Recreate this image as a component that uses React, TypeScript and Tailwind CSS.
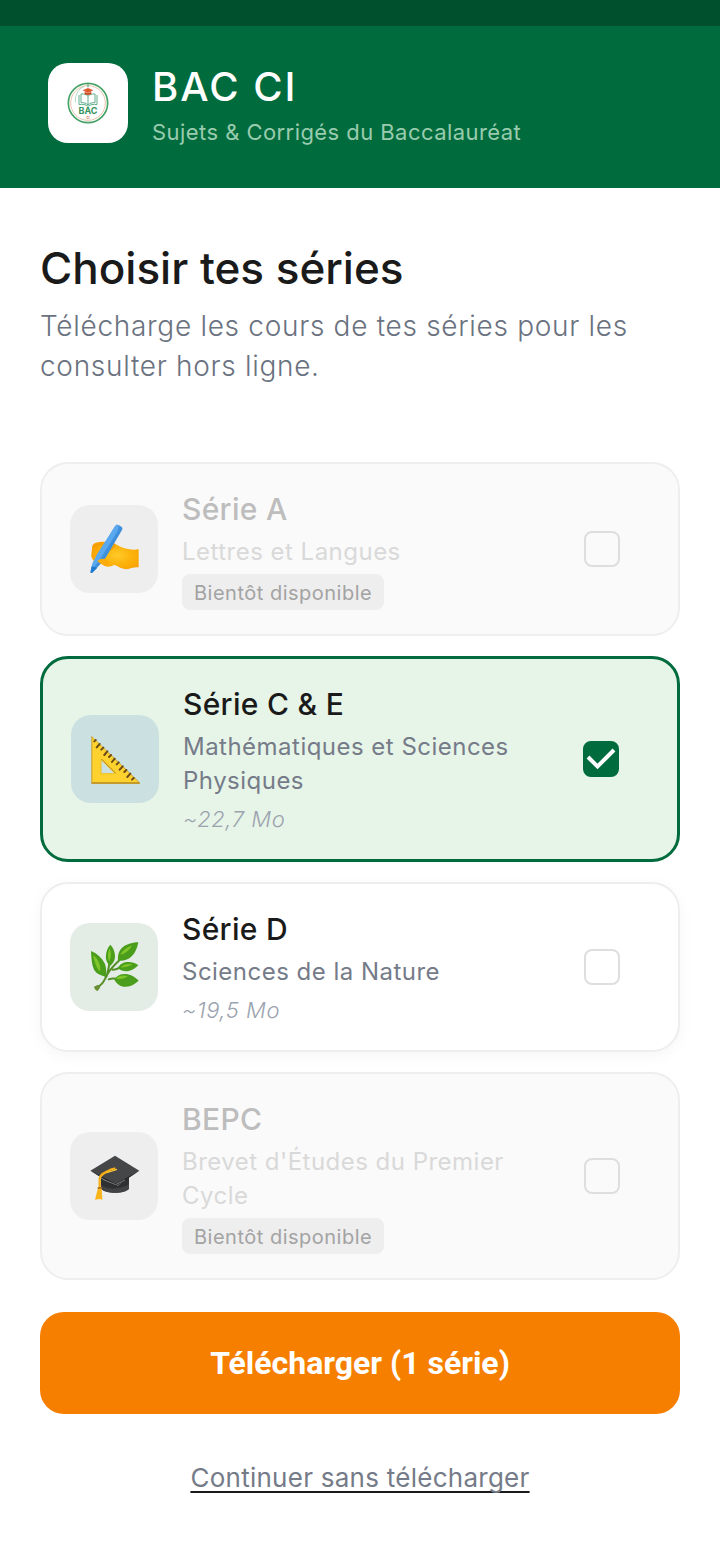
import React, { useState } from 'react';

interface Serie {
  id: string;
  title: string;
  description: string;
  size?: string; // missing while the download is not available
  tileClass: string;
  icon: React.ReactNode;
}

const WritingHandIcon = () => (
  <svg viewBox="84 84 156 156" className="size-[52px]" aria-hidden="true">
    <defs>
      <radialGradient id="hand" cx="0.55" cy="0.5" r="0.6">
        <stop offset="0" stopColor="#ffca28" />
        <stop offset="0.5" stopColor="#fcb40d" />
        <stop offset="1" stopColor="#f9a000" />
      </radialGradient>
    </defs>
    <path
      d="M96 190c-4-9-1-18 0-27 0-9 1-15 8-18 8-5 20-5 32-5 9-1 17 1 24 4 12 6 22 12 34 16 14 4 28 5 42 3v54c-9 0-16 0-24 3-12 4-19 3-29-1-8-3-13-7-20-9-8 3-17 7-26 4-7-2-11-6-16-9-5-2-8-5-13-5-6-1-10-5-12-10z"
      fill="url(#hand)"
    />
    <path d="M146 140c10-1 18 4 18 12-2 8-12 11-20 15-12 5-20 15-26 25" fill="none" stroke="#e88e05" strokeWidth="3" />
    <path d="M100 156c8-7 17-9 29-8" fill="none" stroke="#f29b04" strokeWidth="3" />
    <path d="M165 94c3-5 7-6 12-3l7 4c4 3 4 6 2 10l-48 82-20 24-22 23c-3 1-5-1-4-4l6-23 13-25z" fill="#3f90dc" />
    <path d="M165 94c3-5 7-6 12-3l-4 17-54 87-12 15-9 13-6 7c-1 0-1-1 0-4l6-23 13-25z" fill="#5aa9ee" />
    <path d="M95 214l17 4-16 16c-3 1-5-1-4-4z" fill="#1e7bd0" />
    <path d="M112 199c5-7 13-9 19-7 8 2 14 6 15 12-4 5-8 7-15 5-8-1-12-5-19-10z" fill="#fbab08" />
  </svg>
);

const SetSquareIcon = () => (
  <svg viewBox="87 84 156 156" className="size-[52px]" aria-hidden="true">
    <path d="M94 92l146 141v4H94z" fill="#c49a2c" />
    <path d="M97 97l138 134H97z" fill="#fdd22f" />
    <path d="M123 165v41h41z" fill="#cbe0e0" />
    <path d="M123 165v41h41" fill="none" stroke="#edc021" strokeWidth="3" />
    <path d="M124 162l43 43" stroke="#a97b1b" strokeWidth="3" />
    <path
      d="M103 109l4-4M110 127l9-10M124 134l6-6M133 150l9-11M147 156l6-6M156 171l8-10M170 178l6-6M179 194l9-10M193 201l6-6M202 216l9-10M216 224l5-5"
      stroke="#6c4b17"
      strokeWidth="6"
      strokeLinecap="round"
    />
  </svg>
);

const HerbIcon = () => (
  <svg viewBox="84 78 156 156" className="size-[52px]" aria-hidden="true">
    <path
      d="M108 219c20-9 24-22 33-39 8-16 20-28 37-44M140 184c4-22 10-34 9-52M138 188c-4-12-6-20-12-29M158 164c11 1 18-4 24-8M146 193c12-4 20-3 29 0"
      fill="none"
      stroke="#558f27"
      strokeWidth="6"
      strokeLinecap="round"
    />
    <path d="M102 215l12-6 7 8-8 11c-6-2-10-7-11-13z" fill="#6b8f35" />
    <path d="M93 108c17 7 33 20 42 39 5 14 4 27 2 37-12-2-26-6-35-20-7-15-8-36-9-56z" fill="#4a9e1b" />
    <path d="M99 121c10 6 18 18 21 31 1 7 1 13-1 17-10-10-15-28-20-48z" fill="#80c62a" />
    <path d="M151 89c9 9 15 23 14 38-1 12-7 20-15 26-8-8-14-18-12-33 1-12 5-22 13-31z" fill="#4a9e1b" />
    <path d="M149 100c5 12 5 27-1 39-6-10-5-26 1-39z" fill="#80c62a" />
    <path d="M235 82c-15 0-35 5-47 15-11 9-15 23-14 39 12 4 27-1 38-9 13-11 20-28 23-45z" fill="#4a9e1b" />
    <path d="M216 92c-15 4-29 14-35 28 13-4 27-14 35-28z" fill="#80c62a" />
    <path d="M235 151c-12-10-28-12-40-9-11 3-18 9-21 18 8 7 20 10 32 8 13-3 21-9 29-17z" fill="#4a9e1b" />
    <path d="M217 148c-13-3-27 0-35 9 13 1 25-3 35-9z" fill="#80c62a" />
    <path d="M236 197c-11-12-27-20-42-20-14 0-25 6-31 17 7 13 19 22 35 21 15-1 27-8 38-18z" fill="#4a9e1b" />
    <path d="M204 183c-14-4-28-1-36 8 14 3 27 0 36-8z" fill="#80c62a" />
  </svg>
);

const GraduationCapIcon = () => (
  <svg viewBox="84 90 156 156" className="size-[52px]" aria-hidden="true">
    <path d="M123 174v32c14 16 70 17 84 0v-37l-34 28z" fill="#2f3032" />
    <path d="M123 195c16 14 63 14 84-3v14c-14 17-70 16-84 0z" fill="#424345" />
    <path d="M165 107l73 45-67 44c-3 2-5 1-8 0l-72-44z" fill="#454648" />
    <path d="M91 152l76 39 71-39-67 45c-3 2-5 1-8 0z" fill="#252628" />
    <path d="M128 178l39 16 28-14" fill="none" stroke="#a6a6a7" strokeWidth="2" />
    <path d="M166 146c-10-1-17 4-25 9-12 6-20 9-22 21v31" fill="none" stroke="#f6ae17" strokeWidth="7" />
    <path d="M171 148l-31 10" stroke="#f9c638" strokeWidth="4" />
    <path d="M114 204h11l2 35-9-2-13 2z" fill="#f9b51b" />
    <path d="M113 204h13" stroke="#a46d1d" strokeWidth="5" />
  </svg>
);

const AppLogo = () => (
  <svg viewBox="66 69 132 132" className="size-11" role="img" aria-label="BAC CI">
    <circle cx="132" cy="135" r="59" fill="#fff" stroke="#46a367" strokeWidth="5" />
    <circle cx="132" cy="135" r="52" fill="none" stroke="#dda382" strokeWidth="2" />
    <path d="M94 133c-1-26 10-41 27-48" fill="none" stroke="#8bc3a2" strokeWidth="2" />
    <path d="M132 75v13" stroke="#46a367" strokeWidth="3" />
    <path d="M105 111v29c10-2 20-1 27 5 7-6 17-7 27-5v-29M111 108v26c9-1 16 2 21 7 5-5 12-8 21-7v-26M111 108c10-1 17 2 21 7 4-5 11-8 21-7M132 115v26" fill="#fff" stroke="#61ae8b" strokeWidth="3" />
    <path d="M116 97l16-7 16 7-16 8z" fill="#df592c" />
    <path d="M122 101v8c6 3 14 3 20 0v-8l-10 5z" fill="#c94b22" />
    <text x="132" y="168" textAnchor="middle" fontSize="27" fontWeight="700" fill="#35935b" className="font-['Inter',sans-serif]">
      BAC
    </text>
    <text x="132" y="183" textAnchor="middle" fontSize="9" fontWeight="700" fill="#d16a44" className="font-['Inter',sans-serif]">
      CI
    </text>
  </svg>
);

const SERIES: Serie[] = [
  {
    id: 'a',
    title: 'Série A',
    description: 'Lettres et Langues',
    tileClass: 'bg-[#eeeeee]',
    icon: <WritingHandIcon />,
  },
  {
    id: 'ce',
    title: 'Série C & E',
    description: 'Mathématiques et Sciences Physiques',
    size: '~22,7 Mo',
    tileClass: 'bg-[#cbe0e0]',
    icon: <SetSquareIcon />,
  },
  {
    id: 'd',
    title: 'Série D',
    description: 'Sciences de la Nature',
    size: '~19,5 Mo',
    tileClass: 'bg-[#e4ece6]',
    icon: <HerbIcon />,
  },
  {
    id: 'bepc',
    title: 'BEPC',
    description: "Brevet d'Études du Premier Cycle",
    tileClass: 'bg-[#eeeeee]',
    icon: <GraduationCapIcon />,
  },
];

interface SerieCardProps {
  serie: Serie;
  checked: boolean;
  onToggle: () => void;
}

const SerieCard: React.FC<SerieCardProps> = ({ serie, checked, onToggle }) => {
  const available = Boolean(serie.size);

  // Card look depends on availability first, then on selection
  const getCardClass = () => {
    if (!available) return 'border-2 border-[#eeeeee] bg-[#fafafa]';
    if (checked) return 'border-3 border-[#006b3c] bg-[#e7f5e8]';
    return 'border-2 border-[#eeeeee] bg-white shadow-[0_4px_16px_rgba(0,0,0,0.04)]';
  };

  return (
    <label htmlFor={serie.id} className={`flex items-center rounded-[28px] px-7 py-6 ${getCardClass()}`}>
      <span className={`mr-6 grid size-[88px] shrink-0 place-items-center rounded-[20px] ${serie.tileClass}`}>
        {serie.icon}
      </span>

      <span className="flex min-w-0 flex-1 flex-col items-start gap-[5px]">
        <span className={`text-[30px] leading-[42px] font-medium tracking-[0.01em] ${available ? 'text-[#1a1a1a]' : 'text-[#bdbdbd]'}`}>
          {serie.title}
        </span>
        <span className={`text-2xl leading-[34px] tracking-[0.02em] ${available ? 'text-[#757b88]' : 'text-[#d9d9d9]'}`}>
          {serie.description}
        </span>
        {available ? (
          <span className="text-[22px] leading-8 font-light tracking-wide text-[#9ca3af] italic">{serie.size}</span>
        ) : (
          <span className="rounded-lg bg-[#eeeeee] px-3 pt-0.5 text-xl leading-[34px] tracking-wide text-[#a3a3a3]">
            Bientôt disponible
          </span>
        )}
      </span>

      {/* Checkbox centred in its touch area */}
      <span className="grid w-24 shrink-0 place-items-center">
        <input
          id={serie.id}
          type="checkbox"
          checked={checked}
          disabled={!available}
          onChange={onToggle}
          className="col-start-1 row-start-1 size-9 appearance-none rounded-lg border-2 border-[#dedede] checked:border-[#006b3c] checked:bg-[#006b3c]"
        />
        {checked && (
          <svg viewBox="0 0 36 36" className="pointer-events-none col-start-1 row-start-1 size-9" aria-hidden="true">
            <path d="M5 16l9.500 9.500L31 9" fill="none" stroke="#fff" strokeWidth="4" />
          </svg>
        )}
      </span>
    </label>
  );
};

const App: React.FC = () => {
  const [selected, setSelected] = useState<string[]>(['ce']);

  const toggle = (id: string) => {
    setSelected(prev => (prev.includes(id) ? prev.filter(s => s !== id) : [...prev, id]));
  };

  return (
    <div className="min-h-screen bg-white font-['Inter',sans-serif]">
      {/* Status bar strip */}
      <div className="h-[26px] bg-[#00502d]" />

      <header className="flex items-center gap-6 bg-[#006b3c] px-12 pt-8 pb-10">
        <div className="grid size-20 shrink-0 place-items-center rounded-[20px] bg-white">
          <AppLogo />
        </div>
        <div>
          <p className="text-[40px] leading-[58px] font-medium tracking-wider text-white">BAC CI</p>
          <p className="text-[22px] leading-8 tracking-[0.02em] text-[#99cbae]">Sujets &amp; Corrigés du Baccalauréat</p>
        </div>
      </header>

      <main className="px-10 pt-12 pb-12">
        <h1 className="text-[44px] leading-[64px] font-medium text-[#1a1a1a]">Choisir tes séries</h1>
        <p className="mt-1.5 text-[28px] leading-10 font-light tracking-wide text-[#6b7280]">
          Télécharge les cours de tes séries pour les consulter hors ligne.
        </p>

        <div className="mt-[76px] flex flex-col gap-5">
          {SERIES.map(serie => (
            <SerieCard
              key={serie.id}
              serie={serie}
              checked={selected.includes(serie.id)}
              onToggle={() => toggle(serie.id)}
            />
          ))}
        </div>

        <button
          type="button"
          className="mt-8 w-full rounded-3xl bg-[#f77f00] py-7 font-['Roboto',sans-serif] text-[32px] leading-[46px] font-bold text-white"
        >
          Télécharger ({selected.length} série{selected.length > 1 ? 's' : ''})
        </button>

        <div className="mt-11 text-center">
          <a
            href="#accueil"
            className="text-[26px] leading-10 tracking-[0.01em] text-[#757b88] underline decoration-[#1a1a1a] decoration-2 underline-offset-4 [text-decoration-skip-ink:none]"
          >
            Continuer sans télécharger
          </a>
        </div>
      </main>
    </div>
  );
};

export default App;
